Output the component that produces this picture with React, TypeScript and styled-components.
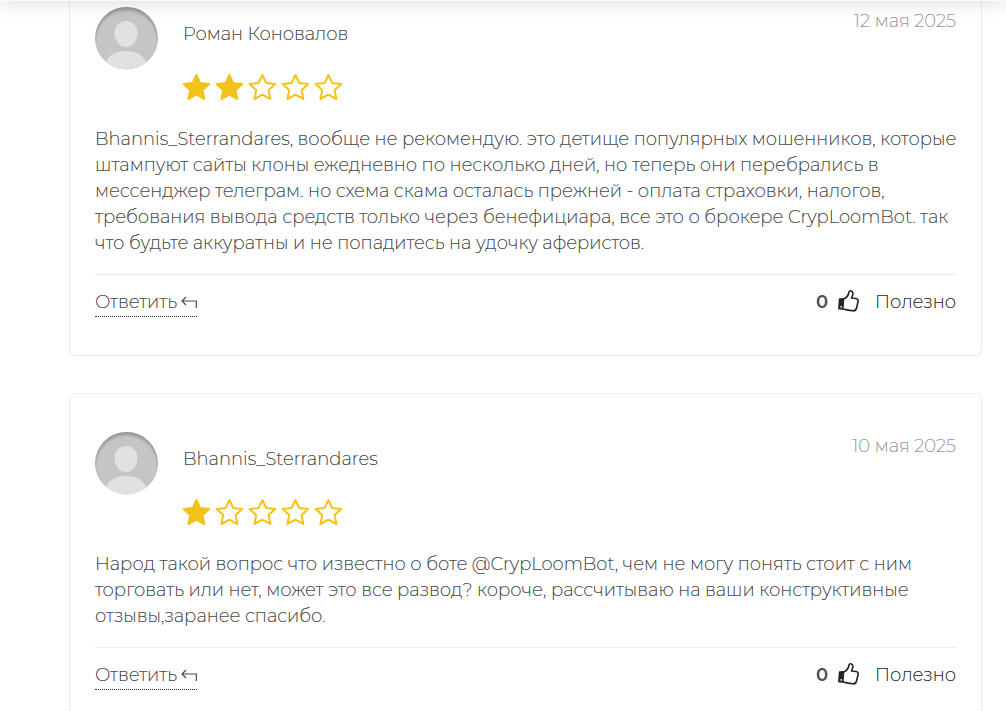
import React from 'react';
import styled, { createGlobalStyle } from 'styled-components';

const GlobalStyle = createGlobalStyle`
  *, *::before, *::after { box-sizing: border-box; }
  html { overflow-x: hidden; scrollbar-width: none; }
  body {
    margin: 0;
    background: #fff;
    color: #484848;
    font-family: Montserrat, Inter, "Open Sans", sans-serif;
    font-size: 18px;
    font-weight: 200;
    line-height: 26px;
    text-shadow: 0 0 0 currentColor;
  }
`;

const HeaderEdge = styled.header`
  position: fixed;
  inset: -40px 0 auto;
  height: 41px;
  background: #fafafa;
  box-shadow: 0 0 20px rgba(0, 0, 0, 0.16);
`;

const Reviews = styled.main`
  height: 100vh;
  overflow: hidden;
  padding: 0 24px 0 69px;
`;

const Card = styled.article<{ $continued?: boolean }>`
  padding: ${(p) => (p.$continued ? '7px' : '38px')} 25px 38px;
  margin-bottom: 37px;
  border: 1px solid #ececec;
  border-top-width: ${(p) => (p.$continued ? '0' : '1px')};
  border-radius: ${(p) => (p.$continued ? '0 0 6px 6px' : '6px')};
`;

const Head = styled.header`
  display: flex;
  align-items: flex-start;
`;

const Author = styled.div`
  flex: 1;
  padding: 14px 0 0 25px;
`;

const Name = styled.h3`
  margin: 0;
  font-size: 18px;
  font-weight: 200;
`;

const PostedOn = styled.time`
  padding-top: 1px;
  color: #999;
`;

const Rating = styled.div`
  display: flex;
  gap: 5px;
  margin-top: 26px;
`;

const Body = styled.p`
  margin: 25px -4px 18px 0;
`;

const Footer = styled.footer`
  display: flex;
  justify-content: space-between;
  align-items: flex-start;
  padding-top: 14px;
  border-top: 1px solid #ececec;
`;

const Reply = styled.a`
  display: flex;
  align-items: center;
  gap: 4px;
  padding-bottom: 1px;
  color: inherit;
  text-decoration: none;
  border-bottom: 1px dotted #333;
`;

const Helpful = styled.button`
  display: flex;
  align-items: center;
  padding: 0;
  border: 0;
  background: none;
  color: #212529;
  font: inherit;
  text-shadow: inherit;
  cursor: pointer;
`;

const Count = styled.b`
  margin-right: 10px;
  color: #4f4f4f;
  font-weight: 600;
  text-shadow: none;
`;

const HelpfulLabel = styled.span`
  margin-left: 16px;
  text-shadow: 0 0 0 currentColor;
`;

function Avatar({ id }: { id: string }) {
  return (
    <svg width="63" height="63" viewBox="0 0 63 63" role="img" aria-label="avatar">
      <defs>
        <clipPath id={id}><ellipse cx="31.5" cy="31.2" rx="31.5" ry="31.2" /></clipPath>
        <radialGradient id={id + 'g'} cx="0.5" cy="0.55" r="0.55">
          <stop offset="0.84" stopColor="#c5c5c5" />
          <stop offset="1" stopColor="#8c8c8c" />
        </radialGradient>
      </defs>
      <g clipPath={`url(#${id})`}>
        <rect width="63" height="63" fill={`url(#${id}g)`} />
        <path d="M31 14C38 14 42.500 19 42.500 26C42.500 33 38 40 31 40S19.500 33 19.500 26C19.500 19 24 14 31 14Z" fill="#e1e1e1" />
        <path d="M11 63V55C14 47 22 44 31 44S48 47 51 55V63Z" fill="#e1e1e1" />
      </g>
    </svg>
  );
}

const StarSvg = styled.svg`
  overflow: visible;
`;

function Star({ filled }: { filled: boolean }) {
  return (
    <StarSvg width="28" height="28" viewBox="0.6 0 28 28" aria-hidden="true">
      <path
        d="M14 2L17.7 9.9L26.800 10.9L20.200 17.100L22 26L14 21.700L6 26L7.800 17.100L1.200 10.900L10.300 9.900Z"
        fill={filled ? '#f3c21b' : 'none'}
        stroke="#f3c21b"
        strokeWidth="2"
        strokeLinejoin="round"
      />
    </StarSvg>
  );
}

function ReplyIcon() {
  return (
    <svg width="16" height="14" viewBox="0 0 16 14" fill="none" stroke="#4f4f4f" strokeWidth="1.200" aria-hidden="true">
      <path d="M5 2L1 6L5 10M1 6H15.300V13" />
    </svg>
  );
}

function ThumbIcon() {
  return (
    <svg width="21" height="26" viewBox="0 0 21 26" fill="none" stroke="#20242b" strokeWidth="1.600" strokeLinejoin="round" aria-hidden="true">
      <path d="M5.500 10C8.500 9 10.500 6 11 3C11.500 0.700 15.300 1.700 14.900 5C14.700 6.800 13.800 7.700 13.500 9L18 9.500C20 9.700 20.500 11 20 13L18.700 18.500C18.200 21 17 22 15 21.800C11 21.500 8.500 20.700 5 20" />
      <path d="M1.600 10L5.500 9.700L4.800 20L0.900 19.800Z" fill="#20242b" />
      <circle cx="3.200" cy="17.800" r="0.900" fill="#fff" stroke="none" />
    </svg>
  );
}

interface Review {
  id: string;
  name: string;
  date: string;
  iso: string;
  stars: number;
  text: string;
}

const reviews: Review[] = [
  {
    id: 'r1', name: 'Роман Коновалов', date: '12 мая 2025', iso: '2025-05-12', stars: 2,
    text: 'Bhannis_Sterrandares, вообще не рекомендую. это детище популярных мошенников, которые штампуют сайты клоны ежедневно по несколько дней, но теперь они перебрались в мессенджер телеграм. но схема скама осталась прежней - оплата страховки, налогов, требования вывода средств только через бенефициара, все это о брокере CrypLoomBot. так что будьте аккуратны и не попадитесь на удочку аферистов.',
  },
  {
    id: 'r2', name: 'Bhannis_Sterrandares', date: '10 мая 2025', iso: '2025-05-10', stars: 1,
    text: 'Народ такой вопрос что известно о боте @CrypLoomBot, чем не могу понять стоит с ним торговать или нет, может это все развод? короче, рассчитываю на ваши конструктивные отзывы,заранее спасибо.',
  },
];

export default function App() {
  return (
    <>
      <GlobalStyle />
      <HeaderEdge />
      <Reviews>
        {reviews.map((r, i) => (
          <Card key={r.id} $continued={i === 0}>
            <Head>
              <Avatar id={r.id} />
              <Author>
                <Name>{r.name}</Name>
                <Rating role="img" aria-label={`${r.stars} / 5`}>
                  {[1, 2, 3, 4, 5].map((n) => <Star key={n} filled={n <= r.stars} />)}
                </Rating>
              </Author>
              <PostedOn dateTime={r.iso}>{r.date}</PostedOn>
            </Head>
            <Body>{r.text}</Body>
            <Footer>
              <Reply href="#reply">Ответить <ReplyIcon /></Reply>
              <Helpful type="button">
                <Count>0</Count>
                <ThumbIcon />
                <HelpfulLabel>Полезно</HelpfulLabel>
              </Helpful>
            </Footer>
          </Card>
        ))}
      </Reviews>
    </>
  );
}
